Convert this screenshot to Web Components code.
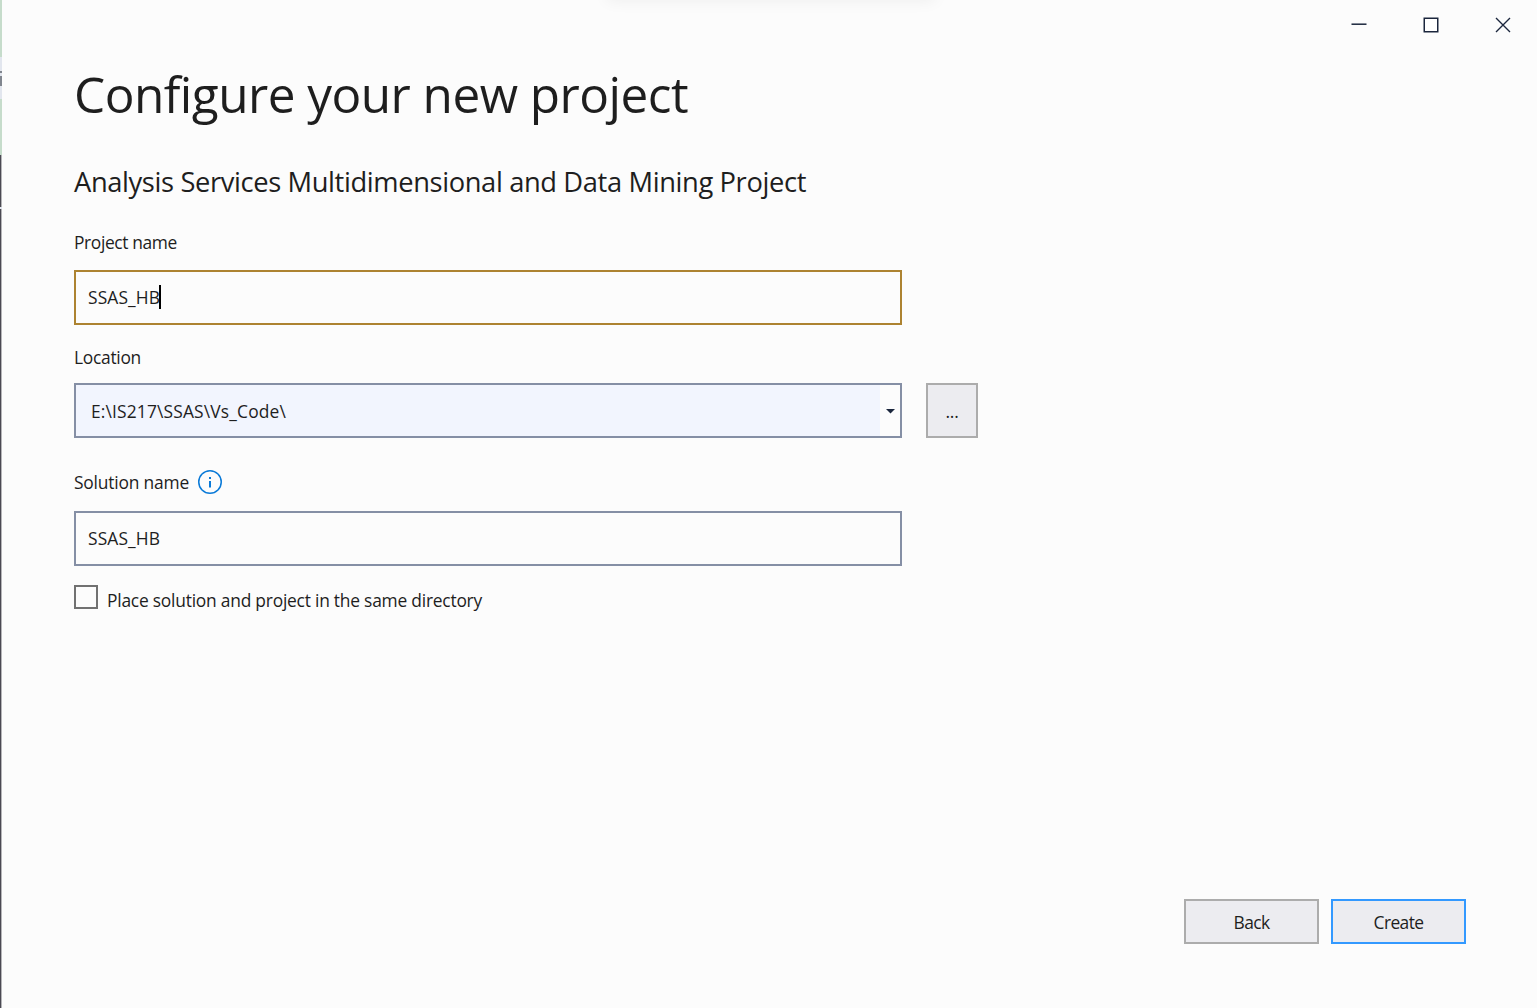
<!DOCTYPE html>
<html lang="en">
<head>
<meta charset="utf-8">
<title>Configure your new project</title>
<style>
html,body{margin:0;height:100%;overflow:hidden;background:#fcfcfc}
body{font-family:"Open Sans","Noto Sans",sans-serif;color:#1e1e1e}
</style>
</head>
<body>
<project-dialog></project-dialog>
<script>
const define = (name, html, setup) => customElements.define(name, class extends HTMLElement {
  connectedCallback() {
    if (this.shadowRoot) return;
    const t = document.createElement('template');
    t.innerHTML = html;
    this.attachShadow({mode:'open'}).append(t.content.cloneNode(true));
    if (setup) setup(this, this.shadowRoot);
  }
});

/* One line of text, tracked so that it spans the width given in the "fit" attribute. */
define('fit-text', `<style>
:host{display:block;white-space:nowrap;flex:none}
span{display:inline-block;font-kerning:normal}
</style><span><slot></slot></span>`, (el, root) => {
  const s = root.querySelector('span');
  const w = +el.getAttribute('fit');
  const n = el.textContent.length;
  s.style.letterSpacing = ((w - s.getBoundingClientRect().width) / n) + 'px';
  el.style.width = w + 'px';
});

define('window-edge', `<style>
:host{display:flex;flex-direction:column;width:2px;height:1008px;flex:none;box-sizing:border-box;border-right:1px solid #b5b5b8}
i{display:block;flex:none}
.g{margin-right:-1px;background:#c6dccb}.w{margin-right:-1px;background:#e2e6ee}.s{margin-right:-1px;background:#81868f}.d{background:#4b4a53;flex:1}
</style>
<i class="g" style="height:57px"></i><i class="w" style="height:14px"></i><i class="s" style="height:2px"></i><i class="w" style="height:3px"></i><i class="s" style="height:10px"></i><i class="w" style="height:13px"></i><i class="g" style="height:56px"></i><i class="d" style="flex:none;height:52px"></i><i class="w" style="height:2px"></i><i class="d"></i>`);

define('window-controls', `<style>
:host{display:flex;justify-content:flex-end;gap:56px;height:50px;padding:17px 26px 0 0;box-sizing:border-box}
svg{display:block;width:16px;height:16px;fill:none;stroke:#1b263d}
</style>
<svg viewBox="0 0 16 16"><path d="M.5 7.2h15" stroke-width="1.5"/></svg>
<svg viewBox="0 0 16 16"><path d="M1.25 1.25h13.500v13.500H1.250z" stroke-width="1.5" fill="#fff"/></svg>
<svg viewBox="0 0 16 16"><path d="M1 1l14 14M15 1L1 15" stroke-width="1.35"/></svg>`);

define('text-field', `<style>
:host{display:flex;align-items:center;width:828px;height:55px;box-sizing:border-box;border:2px solid #858fa5;padding:0 0 2px 12px;background:#fcfcfc;font-size:17.4px;line-height:24px}
:host([focused]){border-color:#ad8331}
b{display:none;width:2px;height:24px;background:#000;margin-left:-1px}
:host([focused]) b{display:block}
</style><slot></slot><b></b>`);

define('combo-field', `<style>
:host{display:flex;align-items:center;width:828px;height:55px;box-sizing:border-box;border:2px solid #858fa5;background:#f2f5fe;font-size:17.4px;line-height:24px}
.v{flex:1;padding-left:15px}
.a{width:20px;height:100%;background:#fcfcfc;display:flex;align-items:center;justify-content:center;padding-top:1px;box-sizing:border-box}
svg{display:block;width:9px;height:5px}
</style><div class="v"><slot></slot></div><div class="a"><svg viewBox="0 0 9 5"><path d="M0 0h9L4.5 4.6z" fill="#1b263d"/></svg></div>`);

define('push-button', `<style>
:host{display:flex;align-items:center;justify-content:center;width:135px;height:45px;box-sizing:border-box;border:2px solid #acacac;background:#ececf0;font-size:17.4px;line-height:24px}
:host([primary]){border-color:#3399ff}
:host([square]){width:52px;height:55px}
</style><slot></slot>`);

define('info-icon', `<style>:host,svg{display:block;width:24px;height:24px}</style>
<svg viewBox="0 0 24 24"><circle cx="12" cy="12" r="11.25" fill="none" stroke="#0a7ad8" stroke-width="1.5"/><path d="M11 7h2v2h-2zM11 11h2v6.500h-2z" fill="#0a7ad8"/></svg>`);

define('check-box', `<style>
:host{display:flex;gap:9px;height:32px;font-size:17.4px;line-height:24px}
i{width:24px;height:24px;box-sizing:border-box;border:2px solid #717171;background:#fcfcfc}
div{padding-top:3px}
</style><i></i><div><slot></slot></div>`);

define('project-dialog', `<style>
:host{display:flex;width:1537px;height:1008px;background:#fcfcfc;overflow:hidden;position:relative}
.shade{position:absolute;left:610px;top:-22px;width:322px;height:20px;box-shadow:0 0 16px 3px rgba(0,0,0,.06)}
main{flex:1;display:flex;flex-direction:column}
form{display:flex;flex-direction:column;align-items:flex-start;margin:0;padding-left:72px}
.title{font-size:49.5px;line-height:68px;margin-top:10px}
.sub{font-size:27.3px;line-height:38px;margin-top:35px}
.label{font-size:17.4px;line-height:24px}
.row{display:flex;align-items:center}
footer{display:flex;justify-content:flex-end;gap:12px;margin-top:auto;padding:0 71px 64px 0}
</style>
<div class="shade"></div>
<window-edge></window-edge>
<main>
<window-controls></window-controls>
<form>
<fit-text class="title" fit="614">Configure your new project</fit-text>
<fit-text class="sub" fit="732">Analysis Services Multidimensional and Data Mining Project</fit-text>
<fit-text class="label" fit="103" style="margin-top:29px">Project name</fit-text>
<text-field focused style="margin-top:16px"><fit-text fit="72">SSAS_HB</fit-text></text-field>
<fit-text class="label" fit="67" style="margin-top:20px">Location</fit-text>
<div class="row" style="margin-top:14px;gap:24px"><combo-field><fit-text fit="195">E:\\IS217\\SSAS\\Vs_Code\\</fit-text></combo-field><push-button square><fit-text fit="13">...</fit-text></push-button></div>
<div class="row" style="margin-top:32px;gap:9px"><fit-text class="label" fit="115">Solution name</fit-text><info-icon></info-icon></div>
<text-field style="margin-top:17px"><fit-text fit="72">SSAS_HB</fit-text></text-field>
<check-box style="margin-top:19px"><fit-text fit="375">Place solution and project in the same directory</fit-text></check-box>
</form>
<footer><push-button><fit-text fit="36">Back</fit-text></push-button><push-button primary><fit-text fit="50">Create</fit-text></push-button></footer>
</main>`);
</script>
</body>
</html>
